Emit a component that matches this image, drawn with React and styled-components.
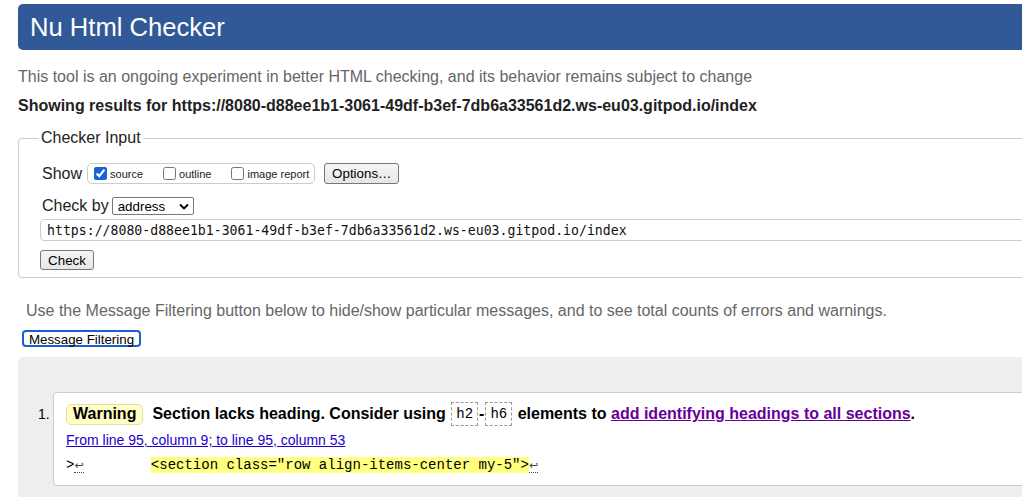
import React from 'react';
import styled, { createGlobalStyle } from 'styled-components';

const Global = createGlobalStyle`
    html, body { margin: 0; padding: 0; overflow: hidden; background: #fff; }
    body { font-family: "Liberation Sans", Arial, sans-serif; color: #000; }
`;

const Page = styled.div`
    width: 1100px;
    padding: 4px 0 0 18px;
`;

const Header = styled.h1`
    margin: 0;
    height: 46px;
    line-height: 46px;
    padding-left: 12px;
    background: #315997;
    color: #fff;
    font-size: 25.6px;
    font-weight: normal;
    border-radius: 5px 0 0 5px;
`;

const Intro = styled.p`
    margin: 17px 0 0;
    font-size: 16px;
    line-height: 20px;
    color: ${p => p.muted ? '#666' : '#222'};
    font-weight: ${p => p.bold ? 'bold' : 'normal'};
    margin-top: ${p => p.gap || 17}px;
    margin-left: ${p => p.indent || 0}px;
`;

const Fieldset = styled.fieldset`
    margin: 12px 0 0;
    padding: 0 0 7px 22px;
    border: 1px solid #ccc;
    border-radius: 4px;
    min-width: 0;
`;

const Legend = styled.legend`
    margin-left: -2px;
    padding: 0 2px;
    font-size: 16px;
    line-height: 20px;
    color: #222;
`;

const Row = styled.div`
    display: flex;
    align-items: center;
    margin-top: ${p => p.top || 0}px;
    height: ${p => p.h || 'auto'};
`;

const Label = styled.span`
    font-size: 16px;
    color: #222;
    margin-left: 1px;
`;

const ShowBox = styled.div`
    display: flex;
    align-items: center;
    height: 19px;
    margin-left: 5px;
    padding: 0 5px 0 2px;
    border: 1px solid #ccc;
    border-radius: 5px;
    gap: 16px;
`;

const Opt = styled.label`
    display: flex;
    align-items: center;
    font-size: 11px;
    color: #222;
    input {
        margin: 0 3px 0 4px;
        width: 13px;
        height: 13px;
        accent-color: #1a62d6;
    }
`;

const Btn = styled.button`
    font-family: "Liberation Sans", Arial, sans-serif;
    font-size: 13.33px;
    height: ${p => p.h || 20}px;
    width: ${p => p.w}px;
    padding: 0;
    color: #000;
    background: ${p => p.focus ? '#fff' : 'linear-gradient(#f6f6f6, #e6e6e6)'};
    border: ${p => p.focus ? '2px solid #1a5fd6' : '1px solid #777'};
    border-radius: ${p => p.focus ? 4 : 3}px;
    margin-left: ${p => p.ml || 0}px;
    margin-top: ${p => p.mt || 0}px;
    display: block;
`;

const SelectWrap = styled.div`
    display: inline-flex;
    align-items: center;
    justify-content: space-between;
    width: 82px;
    height: 18px;
    box-sizing: border-box;
    border: 1px solid #777;
    border-radius: 2px;
    padding: 0 4px 0 5px;
    margin-left: 3px;
    select {
        appearance: none;
        border: 0;
        background: none;
        padding: 0;
        font-family: "Liberation Sans", Arial, sans-serif;
        font-size: 13.33px;
        color: #000;
        outline: none;
    }
`;

const UrlInput = styled.input`
    display: block;
    box-sizing: border-box;
    width: 1100px;
    height: 22px;
    margin-top: 4px;
    margin-left: -1px;
    padding: 0 6px;
    border: 1px solid #ccc;
    border-radius: 4px;
    font-family: "DejaVu Sans Mono", Menlo, monospace;
    font-size: 13.2px;
    color: #111;
`;

const Results = styled.div`
    margin-top: 10px;
    background: #eee;
    border-radius: 5px 0 0 0;
    padding: 35px 0 30px 35px;
    height: 200px;
`;

const List = styled.ol`
    margin: 0;
    padding: 0;
    list-style: none;
`;

const Item = styled.li`
    position: relative;
    background: #fff;
    border: 1px solid #ccc;
    border-radius: 4px;
    padding: 9px 0 10px 12px;
`;

const Num = styled.span`
    position: absolute;
    left: -16px;
    top: 12px;
    font-size: 14px;
    line-height: 18px;
`;

const Msg = styled.p`
    margin: 0;
    display: flex;
    align-items: center;
    height: 24px;
    font-size: 16px;
    font-weight: bold;
    white-space: pre;
`;

const Badge = styled.span`
    display: inline-flex;
    align-items: center;
    height: 19px;
    padding: 0 6px;
    margin-right: 9px;
    background: #ffffc6;
    border: 1px solid #e3dfa4;
    border-radius: 5px;
`;

const Code = styled.code`
    display: inline-flex;
    align-items: center;
    height: 22px;
    padding: 0 4px;
    margin: 0 1px;
    border: 1px dashed #999;
    font-family: "Liberation Mono", "Courier New", monospace;
    font-size: 14px;
    font-weight: normal;
`;

const Link = styled.a`
    color: ${p => p.visited ? '#660099' : '#2200cc'};
    text-decoration: underline;
`;

const Loc = styled.p`
    margin: 6px 0 0;
    font-size: 14px;
    line-height: 16px;
`;

const Extract = styled.p`
    margin: 8px 0 0;
    font-family: "Liberation Mono", "Courier New", monospace;
    font-size: 14px;
    line-height: 18px;
    white-space: pre;
`;

const Mark = styled.mark`
    background: #ffff80;
    color: #000;
`;

const Ret = styled.span`
    font-family: "DejaVu Sans", sans-serif;
    font-size: 11px;
    color: #444;
    border-bottom: 1px dotted #444;
`;

const Chevron = () => (
    <svg width="10" height="7" viewBox="0 0 10 7">
        <path d="M1 1.5 L5 5.5 L9 1.5" fill="none" stroke="#000" strokeWidth="1.8" />
    </svg>
);

const url = 'https://8080-d88ee1b1-3061-49df-b3ef-7db6a33561d2.ws-eu03.gitpod.io/index';

export default function App() {
    return (
        <Page>
            <Global />
            <Header>Nu Html Checker</Header>
            <Intro muted>This tool is an ongoing experiment in better HTML checking, and its behavior remains subject to change</Intro>
            <Intro bold gap={9}>Showing results for {url}</Intro>

            <Fieldset>
                <Legend>Checker Input</Legend>
                <Row top={15} h="21px">
                    <Label>Show</Label>
                    <ShowBox>
                        <Opt><input type="checkbox" defaultChecked />source</Opt>
                        <Opt><input type="checkbox" />outline</Opt>
                        <Opt><input type="checkbox" />image report</Opt>
                    </ShowBox>
                    <Btn w={75} h={21} ml={9}>Options…</Btn>
                </Row>
                <Row top={13} h="18px">
                    <Label>Check by</Label>
                    <SelectWrap>
                        <select defaultValue="address">
                            <option value="address">address</option>
                        </select>
                        <Chevron />
                    </SelectWrap>
                </Row>
                <UrlInput defaultValue={url} />
                <Btn w={54} mt={9} style={{ marginLeft: -1 }}>Check</Btn>
            </Fieldset>

            <Intro muted gap={23} indent={8}>Use the Message Filtering button below to hide/show particular messages, and to see total counts of errors and warnings.</Intro>
            <Btn focus w={119} h={17} ml={4} mt={9}>Message Filtering</Btn>

            <Results>
                <List>
                    <Item>
                        <Num>1.</Num>
                        <Msg>
                            <Badge>Warning</Badge>
                            Section lacks heading. Consider using <Code>h2</Code>-<Code>h6</Code> elements to <Link visited href="#">add identifying headings to all sections</Link>.
                        </Msg>
                        <Loc><Link href="#">From line 95, column 9; to line 95, column 53</Link></Loc>
                        <Extract>&gt;<Ret>↩</Ret>        <Mark>&lt;section class="row align-items-center my-5"&gt;</Mark><Ret>↩</Ret></Extract>
                    </Item>
                </List>
            </Results>
        </Page>
    );
}
